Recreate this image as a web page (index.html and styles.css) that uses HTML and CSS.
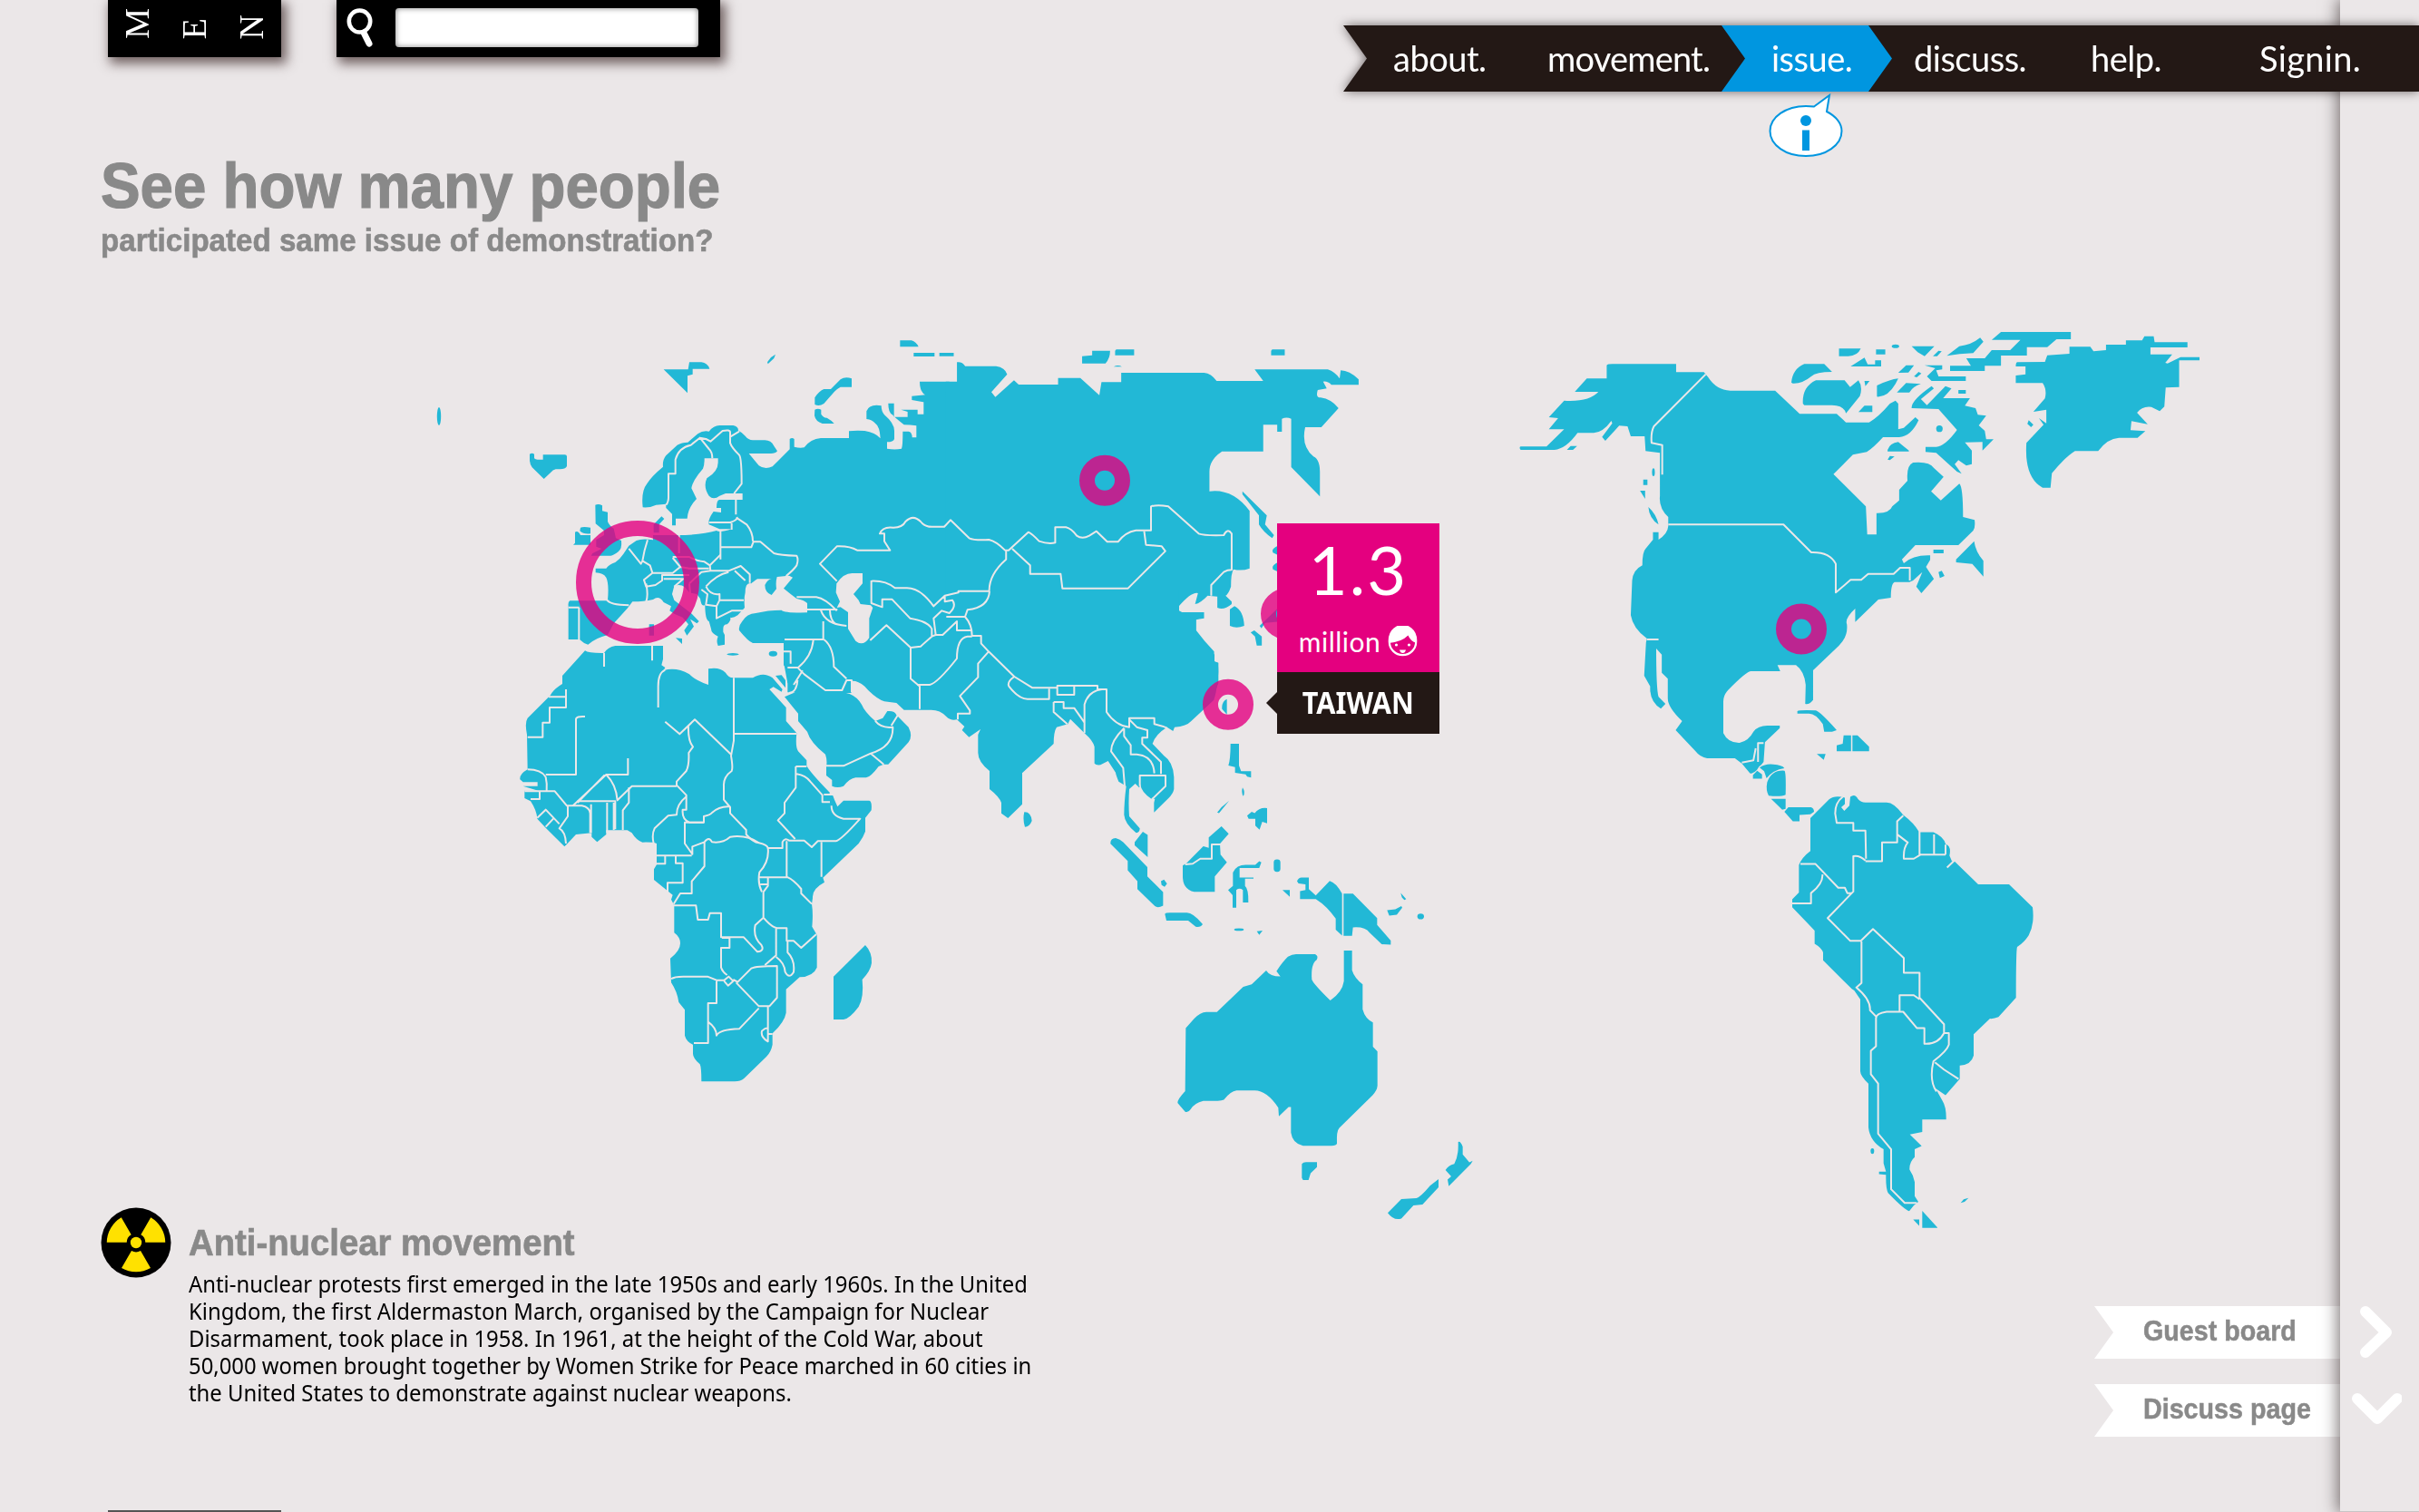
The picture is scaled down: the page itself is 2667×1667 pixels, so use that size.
FILE: index.html
```html
<!DOCTYPE html>
<html lang="en">
<head>
<meta charset="utf-8">
<title>Issue – Anti-nuclear movement</title>
<link rel="stylesheet" href="styles.css">
</head>
<body>
<div class="page">
  <header class="header">
    <div class="menu-tab"><span>M</span><span>E</span><span>N</span></div>
    <div class="search">
      <svg class="search-icon" width="32" height="44" viewBox="0 0 32 44">
        <ellipse cx="15.500" cy="14.500" rx="11.700" ry="12" fill="none" stroke="#fff" stroke-width="4.600"/>
        <path d="M20 27 L26 39" stroke="#fff" stroke-width="7" stroke-linecap="round"/>
      </svg>
      <input class="search-box" type="text" aria-label="Search">
    </div>
    <div class="nav-wrap">
      <div class="nav-shadow">
      <nav class="nav">
        <a class="about">about.</a>
        <a class="movement">movement.</a>
        <a class="issue"><span>issue.</span></a>
        <a class="discuss">discuss.</a>
        <a class="help">help.</a>
        <a class="signin">Signin.</a>
      </nav>
      </div>
      <svg class="bubble" width="84" height="72" viewBox="1949 103 84 72">
        <path d="M2000 117.500 L2017 105 L2014 123 C2024 128 2030.500 136 2030.500 144.500 C2030.500 160 2013 172 1991 172 C1969 172 1951.500 160 1951.500 144.500 C1951.500 129 1969 117 1991 117 Q1996 117 2000 117.500Z" fill="#fff" stroke="#0096e0" stroke-width="2"/>
        <circle cx="1991" cy="133" r="6" fill="#0096e0"/>
        <rect x="1987" y="143.500" width="8" height="22.500" fill="#0096e0"/>
      </svg>
    </div>
  </header>

  <main class="main">
    <h1 class="title">See how many people</h1>
    <p class="subtitle">participated same issue of demonstration?</p>

    <section class="stage">
      <svg class="map" viewBox="0 360 2580 960">
        <g class="land">
          <ellipse cx="484" cy="459" rx="2.200" ry="10"/>
          <g transform="translate(560 360) scale(.33333)">
            <path d="M72 422Q80 417 87 422V436Q92 441 100 440H116V424H188Q195 424 195 430V462Q190 472 172 472H158Q148 474 142 482L119 504L80 466Q72 455 72 440Z"/>
            <path d="M515 142H596L600 118H640Q660 120 667 140H611V158L594 163V220Z"/>
            <path d="M885 92L880 105 860 124 858 118 870 102Z"/>
            <path d="M1015 235Q1030 212 1045 207H1068L1100 175Q1115 165 1137 172V200H1100Q1090 205 1080 215L1045 255Q1030 265 1015 258Z"/>
            <path d="M1015 275Q1025 270 1036 275V290Q1045 303 1055 302Q1070 310 1079 321H1040Q1018 315 1014 295Z"/>
            <path d="M1297 46H1335Q1350 50 1358 67H1297ZM1342 87H1411V99H1342Z"/>
            <path d="M289 590Q300 585 312 592V610L330 614V645Q336 660 350 668L357 700L375 708Q378 735 365 745Q350 757 340 758H275L280 750L310 735L292 728V705L318 690V675L290 652Z"/>
            <path d="M216 722L222 716V680Q232 674 240 690H273V722ZM240 665Q250 661 273 665V685Q250 688 238 676Z"/>
            <path d="M482 655L508 628L517 636L500 655V682H482Z"/>
            <path d="M446 598Q440 545 460 520Q475 495 513 464Q510 435 530 420L560 392Q575 383 595 383L628 355Q645 343 665 347Q680 327 700 327H745Q762 330 762 344Q775 350 785 362Q795 375 810 376H850Q870 376 880 395L891 412Q885 420 870 420H797L830 460Q850 475 875 463L932 406V372Q940 366 947 372V398Q965 403 980 400Q1000 372 1035 369H1128V346Q1150 343 1180 345Q1215 350 1232 370Q1230 330 1215 320Q1205 308 1186 306V280Q1195 255 1235 262Q1235 280 1245 292Q1278 320 1278 345V372Q1275 382 1254 382V404Q1280 409 1302 404Q1306 395 1306 347H1325Q1336 347 1337 367H1351V328Q1330 325 1310 325Q1278 300 1272 292Q1258 285 1258 254H1277V299H1322V282L1300 275H1355V290H1375V250L1336 243V230L1380 226Q1362 215 1362 182H1460V1130L1040 1180H925L912 1110V1047H810Q795 1042 765 1005Q762 990 775 975Q790 950 820 948Q860 938 905 938Q915 948 990 946V915Q980 905 955 900Q935 885 912 866L942 830Q925 820 920 825Q905 826 890 828Q885 845 888 868L872 888Q850 880 850 855Q860 835 872 835Q830 835 825 835Q810 845 805 850Q785 845 785 880Q780 900 783 930L760 955Q745 965 735 962Q740 970 725 985Q712 985 712 1000V1010L717 1020V1052L695 1056Q688 1040 695 1025Q672 1015 672 1000Q668 985 665 975Q652 970 652 920Q640 930 636 900L625 885L600 880L585 862Q570 850 550 858L543 885L550 905L575 925L608 950L632 975L625 982L603 968L615 992L592 1022L583 1005L597 985L578 962L550 950L535 940L540 925L515 912Q500 888 480 903Q450 910 412 910L395 932L350 982L330 1020Q290 1030 265 1052Q250 1048 237 1035H200V930L200 925Q198 910 205 907H325L335 915L330 905Q335 850 325 830Q315 815 290 814V800H325Q335 787 355 780Q370 770 382 752L400 725L425 708Q445 700 480 706V690H560Q640 690 690 675Q700 683 740 670H700L665 655Q660 640 680 612L705 615V600H690Q690 573 700 573H776V552H720L700 560Q680 575 665 560Q645 530 658 502Q695 480 695 450V436H650Q650 460 645 470Q610 510 607 535L624 570Q595 600 593 635H555V658H543V620L523 600V587L490 590Q470 600 446 598Z"/>
            <path d="M467 985H483V1022H467ZM555 1030L576 1032V1050Z"/>
            <ellipse cx="744" cy="1084" rx="20" ry="4"/><ellipse cx="877" cy="1082" rx="14" ry="9"/>
          </g>
          <g transform="translate(940 360) scale(.39541 .33333)">
            <path d="M255 182H291V118Q305 115 314 131H400Q425 135 431 158L387 217L398 233L450 178L463 192H573V170H635L688 227L694 184H749V153H980Q1000 155 1015 180H1145L1121 142H1325Q1345 150 1358 172L1361 145Q1385 145 1411 175V193H1335Q1325 180 1312 182L1322 205L1297 210Q1290 235 1305 235Q1335 240 1355 270L1307 333H1262Q1250 395 1285 430Q1303 440 1303 480V562L1223 465V305Q1210 298 1197 305V348H1184V325H1145V413H1030Q995 440 995 480V545Q1060 535 1107 610V800Q1085 810 1062 803Q1055 815 1055 860Q1048 885 1040 890L1057 910V918Q1035 940 1017 930V893L990 890Q970 915 955 918L963 882Q945 877 910 925V945H980V965Q965 967 958 970V1005Q980 1040 1008 1075V1108L1020 1112V1180L1000 1240H260V182Z"/>
            <path d="M242 87H282V98H242ZM640 98L668 95V80H718Q718 105 705 122H640ZM735 76H785V95H732V80ZM728 133Q740 125 751 133ZM1170 76H1205V95H1167V80Z"/>
            <path d="M1087 545L1155 625L1150 655L1175 690L1170 700Q1145 680 1133 655V625L1087 555Z"/>
            <path d="M1065 925Q1090 940 1092 990Q1070 1000 1052 990V935ZM1110 1012L1120 1005L1141 1025V1055H1127L1122 1025ZM1190 723Q1165 735 1172 748L1190 758ZM1190 778Q1165 790 1172 803L1190 813ZM1135 990L1200 915V975L1150 980L1140 998Z"/>
          </g>
          <g transform="translate(900 640) scale(.33333)">
            <path d="M20 30H1200V100L1255 130V180L1300 225L1317 245V268L1328 272Q1335 330 1315 395L1240 465Q1225 482 1185 485L1180 498L1160 485Q1120 510 1112 540L1150 580Q1180 600 1183 650V690Q1180 705 1165 720L1117 767V735L1120 722H1108Q1075 700 1072 675L1068 685L1055 672L1035 690Q1032 740 1035 780L1070 820Q1070 833 1058 835Q1020 805 1018 775Q1018 735 1025 680L1000 665Q990 640 990 635L965 597L940 610Q925 612 920 605V550Q915 530 890 508L840 458L832 475L795 485Q785 500 785 540L681 637V740L634 786L612 770V735Q605 715 573 690V630Q535 600 535 570V510L543 492L505 518L482 495L490 483L465 460Q445 465 430 450Q410 428 380 428H290L265 405L225 400Q195 390 160 350Q135 330 115 333L116 372L90 372H30L0 345Z"/>
            <path d="M688 766Q710 765 713 795Q705 815 690 815Q682 790 688 766ZM1358 392Q1340 400 1342 425L1358 443Z"/>
          </g>
          <g transform="translate(560 700) scale(.33333)">
            <path d="M925 115V190H950L915 205L960 260V285L990 320Q1000 355 1050 395Q1057 415 1053 435V465L1072 480V500Q1090 508 1110 500Q1130 475 1150 472H1185Q1200 470 1226 435L1243 428H1258L1325 355Q1340 335 1325 305L1285 265Q1280 250 1255 252L1240 275L1215 285Q1180 255 1170 230Q1155 205 1130 195L1110 190V160L1080 100L1050 0H912V100Z"/>
            <path d="M255 52Q265 60 310 60H318Q330 40 355 36H513V80L508 100L520 108L515 118Q555 105 600 130Q620 150 663 165V112Q700 105 720 125Q730 142 745 142H810Q845 120 875 142L908 180L905 188L878 172L865 180L920 240V285L955 325Q950 370 960 385L988 415V432Q995 450 1065 522Q1060 528 1075 532L1080 545L1090 568L1110 548H1195Q1205 550 1202 580L1182 605V650Q1175 670 1160 690L1042 803L1047 818Q1005 840 1008 870L1005 890Q1010 920 1006 965L1022 992V1100Q1010 1130 965 1132L920 1172V1250Q915 1280 875 1318V1355Q870 1380 855 1395L780 1468Q770 1477 750 1477H640Q640 1430 635 1420Q612 1400 612 1385V1355Q590 1345 585 1325V1240L565 1215Q560 1180 540 1150L537 1070Q570 1045 570 1020Q570 1000 550 985V895L540 875L545 860L483 810V775L492 760V690Q480 685 445 686Q425 680 410 655L395 646H325V660L295 685L277 668V655L225 660L197 690L187 700L125 638L97 608Q95 580 75 550L55 540V515H100L50 500H98V487H50L40 478Q38 460 65 445L63 330Q55 290 65 275L140 200Q150 180 180 162V135Z"/>
            <path d="M1182 1026Q1205 1050 1203 1085Q1200 1110 1172 1140Q1178 1200 1160 1230Q1130 1270 1110 1272H1077V1130Z"/>
            <path d="M885 135L905 133L918 150V175Z"/>
          </g>
          <g transform="translate(1180 820) scale(.33333 .34439)">
            <path d="M530 0H558V70L565 88H598V108L585 105L580 98L545 93V75L523 70Q530 50 530 0ZM570 140Q580 155 572 168Q565 155 570 140ZM525 183L492 222L486 220L500 203ZM585 230L600 218L610 222Q625 203 651 206V255L635 250L626 275L612 262V240L590 240Z"/>
            <path d="M440 328L458 333V300L500 264L524 288L495 320L497 355L518 380L478 425V474H410Q370 465 372 420V390L385 382Z"/>
            <path d="M213 315L240 282L256 292V363L213 325ZM133 320Q132 303 150 302Q165 305 175 315L255 395V425L307 475V518Q290 527 280 520L222 465V440L190 405V375ZM300 440L310 435 320 448 312 458 302 452Z"/>
            <path d="M313 545Q315 541 330 541H385Q405 540 438 578Q432 588 415 586L390 566H318Z"/>
            <path d="M538 412Q550 388 580 388H612L625 376L632 380L625 398H560V428H606V432H578V455Q590 465 589 508H571V468Q560 460 549 468V525H537V485L522 468L538 455Z"/>
            <rect x="673" y="370" width="22" height="40" rx="10"/><path d="M702 468H726V490ZM617 600L636 598L625 612Z"/><ellipse cx="558" cy="595" rx="16" ry="4"/>
            <path d="M750 440Q755 428 765 428H789V465L812 486L858 439Q880 445 899 480V614L878 595V560Q850 520 812 497H760V472L778 468V450L755 447ZM904 480H935L1015 558V580L1060 630V643L1030 642L990 605Q975 585 935 588L932 615H904Z"/>
            <path d="M1048 533L1075 530 1095 520 1098 525 1080 547 1055 550ZM1093 478L1111 497 1105 500 1097 492Z"/><ellipse cx="1159" cy="553" rx="11" ry="9"/>
            <path d="M648 726Q660 745 695 745L682 728Q705 695 720 682Q735 673 750 674H810Q822 680 815 692Q795 705 799 755Q805 770 860 822Q900 795 905 760V662H932V725Q940 750 967 770V850Q975 880 1001 892V970L1016 985V1095Q1015 1110 1000 1125L890 1230Q880 1240 882 1280Q880 1288 860 1287H770Q735 1280 730 1245V1163H722L690 1193L688 1165Q650 1110 610 1110H550Q530 1112 508 1140Q500 1144 480 1143H440Q410 1150 398 1170Q390 1182 380 1178L355 1150Q353 1140 380 1112L382 910L410 880Q430 860 450 859H485L572 778L600 770Z"/>
            <path d="M766 1345Q770 1339 780 1339H816V1355L795 1375L788 1397H770L766 1390Z"/>
            <path d="M1283 1275Q1290 1270 1298 1290V1315L1320 1340L1331 1335L1325 1345L1252 1416L1248 1395L1260 1385L1241 1365Q1250 1350 1270 1345Q1285 1320 1283 1275ZM1218 1394V1420L1165 1475L1135 1478L1095 1520Q1070 1528 1050 1502L1095 1458L1145 1455Q1160 1450 1190 1415Z"/>
          </g>
          <g transform="translate(1650 360) scale(.5102 .33333)">
            <path d="M238 128Q240 124 250 124H388V151H448L457 167Q475 210 505 212H602L655 289H735L755 317H805Q825 300 850 255L862 245L868 255V340L880 335L905 300L912 310Q895 365 870 366H835Q815 400 800 415L770 424L728 488L798 595L801 688H821V617Q850 618 855 595L870 575V540L888 510Q885 460 900 450Q935 445 945 468L966 497L939 545L960 575L1000 520Q1008 530 1008 630L1033 640Q1035 665 1030 675L998 723H905L876 770L880 783Q900 755 937 757V772L928 795L945 835L918 882L907 860L920 812L900 840L892 845H860Q852 850 852 897L825 903L775 977V933Q752 965 757 985Q760 1025 740 1055L684 1137V1235Q675 1252 667 1248L668 1185Q665 1140 647 1120H607L613 1140H550Q540 1140 500 1203Q490 1220 490 1240V1345Q500 1378 525 1377Q545 1370 555 1340Q565 1320 585 1320H612V1328L580 1375L577 1440L572 1450L548 1478L530 1445L515 1428H455Q440 1425 430 1405L387 1335L401 1305Q370 1260 370 1230V1165L357 1145V1085L345 1065Q345 1200 350 1225L365 1248L355 1264Q330 1240 332 1190L319 1155L323 1045L325 1032Q295 1000 290 955L293 840Q295 805 315 790Q315 745 322 735L338 705V680H350V705Q370 685 371 660V630Q350 600 353 560V418L322 412L320 363H290L283 330L265 328L235 378L228 365L250 320L248 312Q230 350 210 352H175Q150 405 125 408H52Q48 400 52 397H108L146 340H113L133 303L113 300L146 245Q200 250 220 216H169L195 172H238Z"/>
            <path d="M637 185Q640 140 665 124H708L725 150Q690 150 680 165Q660 190 640 188ZM662 255Q660 200 690 178H752L764 200L782 178Q792 200 785 230L755 287Q750 260 725 260H665ZM782 283L795 262H812V283ZM740 73H787Q780 98 760 98H740ZM820 76H840V92H820ZM765 132L795 103 802 125H818V112H831V132ZM897 65H946L925 98 910 85ZM943 98L955 80 962 82 952 98ZM973 97L1000 65Q1025 62 1045 37L1052 50L1030 88Q1000 90 973 97ZM868 153L885 128H902L890 152ZM902 165L912 150 918 155 908 168ZM822 195Q850 175 868 172L862 190Q845 235 822 232ZM865 218L885 187L917 190Q900 198 892 218ZM795 180H806L797 197Z"/>
            <ellipse cx="862" cy="65" rx="8" ry="6"/>
            <path d="M925 128H963V142L950 145L955 165H1014V180H940L930 165L948 138ZM980 130H1025L1015 105H1055L1070 78H1110L1132 44H1070L1090 18H1241V42H1210L1190 68H1146V96H1090V130H1055V147H980ZM998 210H1014V222H998Z"/>
            <path d="M897 270Q895 245 940 197L945 205L917 240L930 260L970 197L983 205L965 237H1023L1012 262L1035 270L1040 292L1058 295L1042 327L1055 345L1058 373H1074L1050 410V382L1012 383L1027 410V455L1015 460L998 442L990 455L1005 487L995 480L950 418L927 415V398H950Q970 395 995 342L955 273Z"/>
            <ellipse cx="957" cy="338" rx="7" ry="11"/>
            <path d="M845 408Q850 385 868 382L891 410V413H845ZM845 440L850 428 860 430 850 442ZM1032 710Q1035 745 1052 775V827L1028 785L993 780V770ZM944 738H966V750H944ZM955 812L962 808 968 825 958 832ZM317 506H326V524H317ZM310 543H321V570ZM328 597Q345 620 350 655Q330 635 328 597ZM152 408L160 395H174L165 408Z"/>
            <ellipse cx="339" cy="482" rx="3" ry="13"/>
            <path d="M1125 118Q1122 120 1122 132H1143V158L1122 162V187H1180Q1190 210 1185 238L1160 282L1188 275V320L1172 303L1182 325L1145 385Q1140 500 1180 533H1197L1200 485Q1230 430 1250 412H1300Q1320 370 1345 368H1385L1402 346L1370 343L1372 313L1407 323L1384 285Q1395 262 1415 266L1433 280L1443 265L1446 202L1475 200V112H1519V101H1478L1450 122L1445 120L1460 92H1413V69H1493V52H1422L1420 32H1400L1395 46H1360V60H1317V78L1290 82L1283 67H1238V90L1190 95L1185 117ZM1150 310L1160 325 1155 333 1147 322Z"/>
            <path d="M650 1272Q655 1268 690 1270Q700 1275 735 1335L725 1340H708L705 1315Q690 1280 675 1280H650ZM750 1352H766V1405H735V1385L748 1380ZM769 1352H780L805 1390V1405H769ZM692 1414H711L707 1433Z"/>
          </g>
          <g transform="translate(1880 840) scale(.33333 .34439)">
            <path d="M124 0L180 8Q175 30 152 38ZM180 18Q200 5 225 8Q255 10 262 20Q225 25 203 52L195 30ZM205 65Q220 25 262 28Q268 30 266 105Q250 112 210 108Q200 90 205 65ZM158 42L172 28 188 40V54H158ZM218 118H266V150L255 153ZM262 160L275 145H350Q360 148 360 160L348 168L312 170V190H290Z"/>
            <path d="M348 180L410 120Q425 108 450 112L462 115V135L450 145L460 157L477 140L480 112Q495 100 505 118Q515 130 530 130H600Q625 130 655 170Q690 195 708 225L755 225Q790 240 795 263Q815 270 808 300L816 318L825 319L903 392H1005L1083 465Q1090 520 1070 555Q1055 578 1032 592Q1028 600 1028 755L970 817Q955 823 942 822L888 872V940Q880 970 842 972V1015L795 1067L762 1045L785 1085Q798 1105 797 1145H718V1185L677 1193L716 1230L693 1240V1265Q675 1280 676 1305Q690 1325 693 1345V1390L705 1408L690 1420L675 1438Q660 1435 605 1380Q597 1365 598 1322L575 1320V1312H598L590 1285V1240Q545 1215 540 1170V1030Q513 1005 513 990V760L493 732L485 727L390 635V610Q385 595 362 582V540L288 465V440L310 418V330Q320 305 348 285Z"/>
            <path d="M718 1437L768 1490V1492H718ZM688 1465H708V1485ZM845 1412L855 1400L871 1396L858 1408Z"/><ellipse cx="553" cy="1246" rx="6" ry="9"/>
          </g>
        </g>
        <path class="water" transform="translate(560 360) scale(.33333)" d="M1087 850Q1110 815 1140 816H1173V850L1143 885L1160 905L1166 918L1200 922L1207 930L1195 965V1030Q1175 1060 1150 1040L1125 1000V945L1100 928L1088 930L1098 910L1085 880Z"/>
        <g class="borders">
          <g transform="translate(560 360) scale(.33333)">
            <path d="M523 590Q532 580 531 560V487H554V440Q565 400 605 392L635 368L665 405Q676 415 676 436M605 392L635 368L655 372L670 380L710 345Q735 340 735 350V385Q740 400 765 425Q773 435 773 520L748 552M735 365L765 347"/>
            <path d="M754 573V622M665 648H735Q760 640 758 630M755 632L790 655Q810 680 810 710M740 650V672M703 675V770M703 730H805L812 712H835L880 750Q900 757 955 758Q962 770 955 790Q945 805 920 825"/>
            <path d="M566 690V750M545 762L600 762Q620 775 650 778L668 790L703 755M545 765L570 795L545 815H478L470 790L445 775L440 785L400 735M462 706L452 740L445 775M478 815L450 838L457 860L488 855L510 840V822H600M457 850Q465 890 457 910M515 835H580L550 860M570 795L600 800H665M668 790L670 808H730L770 792L800 820V848M750 808L785 840M600 850L640 812L670 808M655 860Q690 820 730 812M655 860Q670 890 700 885V905H780M640 870L660 885L655 920L690 925L700 905M690 925V965L740 940H780M330 905Q335 920 400 922M235 930V1037M200 929H236M600 850L605 905"/>
            <path d="M955 895H1020Q1050 900 1088 940M990 936H1090M1035 938Q1050 985 1120 990M1065 938Q1065 970 1085 985M1043 975V1035H915"/>
            <path d="M1444 662H1410Q1380 665 1365 645Q1340 620 1315 645Q1305 665 1275 665Q1240 660 1230 685H1245V710L1264 740H1155Q1130 725 1088 727L1032 785L1088 842"/>
          </g>
          <g transform="translate(940 360) scale(.39541 .33333)">
            <path d="M255 663L273 640L325 700Q340 708 380 705Q400 710 425 740H435L490 680Q500 685 520 710Q545 720 565 715V664H595Q610 668 625 692Q640 705 660 692L680 677L710 712H740Q760 680 790 674H832V595Q850 588 880 595L965 685Q980 692 1035 690Q1045 665 1057 685V805Q1045 805 1035 812L1000 855V890"/>
            <path d="M445 735L495 790V818H580L585 866H768L872 743L862 727L818 722L813 677M428 742V770Q380 820 381 875"/>
          </g>
          <g transform="translate(900 640) scale(.33333)">
            <path d="M312 220V325L342 350V425M312 222L232 148L178 198M182 0V75L218 88V62H250L310 125Q370 135 382 160V185L345 218L312 222M182 2Q230 0 260 25H300Q345 25 388 85L425 50L470 40V35H573M573 35Q570 90 500 97L492 120H430M425 50V70L450 65Q465 85 440 108L415 100L388 125L395 180H418L465 135V165H513M492 120Q515 145 515 183H545V208L570 235L655 318L715 355H797V378H853V348H797V355M853 348H930V360H960V435Q990 480 1035 485V455H1118V475L1145 482L1160 488"/>
            <path d="M333 345H375Q400 340 465 258Q465 190 500 185H515M382 185L395 180M570 235L535 275V320L475 382L508 430V440H468V460M655 318Q630 335 637 350Q670 393 700 392H770V358M785 402H818V422H853L887 470V505M785 402V435L830 475M887 470V410Q900 365 945 360"/>
            <path d="M1018 488Q975 530 975 565L1015 620L1020 680M1018 488V515L1040 545V575H1060Q1115 580 1118 638M1035 460L1060 485L1095 495V520H1078V540L1140 600V640M1070 680V645H1155V680L1110 724"/>
          </g>
          <g transform="translate(560 700) scale(.33333)">
            <path d="M318 60V105M477 36V85M497 240V170Q497 125 520 116M747 142V350L738 400Q745 440 740 450Q712 470 714 500V545L735 570V590L788 645V660Q810 685 830 688Q858 695 860 705H908V685Q915 670 930 680H980L1005 702L1025 682H1085Q1100 680 1165 608H1110Q1070 600 1070 565M750 327H955M520 287L568 328L618 280L738 395"/>
            <path d="M597 300Q595 350 612 370L598 390Q600 430 590 450L558 485V497L590 530V578H578Q575 610 600 620H648V600Q670 595 675 588Q700 565 735 568M558 500H410L362 547Q358 495 325 462H397V408M325 462L215 565M255 270Q225 268 225 280V462H125M230 555L320 463M135 205H192V180M192 205V240H138V290H115V338H65"/>
            <path d="M65 445Q110 445 125 470Q130 490 128 517H55M105 517V543H75M128 517H155L195 565H245Q270 570 272 590V655M198 565V600L170 640Q190 650 192 690M97 605L125 578L170 625M125 635L150 608M230 550H355V643M275 655V560M328 555V655M350 555V645M400 505V555L380 580V645"/>
            <path d="M590 535Q558 560 558 595L530 598L485 640Q475 660 482 690M648 620H585V690L610 725V700L650 685V765L608 815V855H570L548 890M492 730H608M492 757H520V732M555 733V755H578V820H528V855M650 685Q665 665 675 685Q710 690 735 668Q790 660 830 688"/>
            <path d="M548 895H622L628 942H662L668 920H705V1000H780L825 1048Q850 1045 838 1025Q810 1000 818 960L845 935V850M860 705Q865 750 832 785Q825 820 840 850M830 802H922V682M835 825H860M860 803V830L845 850M922 800Q945 810 970 840V855L1005 890M845 935Q870 965 890 970H922V1012H945L970 1035L1020 990M887 970V1060L850 1092M887 1065Q915 1085 917 1115Q930 1140 945 1115Q950 1075 925 1050V1012"/>
            <path d="M708 1002H733V1035H705V1100Q710 1115 725 1125M540 1138Q550 1130 580 1130H660L690 1142H715L730 1130L745 1145L728 1160L715 1145M745 1140L760 1148L805 1103Q820 1095 890 1095V1200L865 1228H830L755 1150M690 1145V1218H662V1350H615M662 1280Q690 1300 690 1325Q700 1305 765 1303L830 1235M860 1228V1345Q835 1330 840 1310Q850 1300 860 1300M862 1320H875"/>
            <path d="M952 435H988M952 435V505L915 555V590L893 613L950 675M955 460Q985 465 1000 485L1040 530V553H1065M1045 528H1075M1037 685V800"/>
            <path d="M925 108H960Q1005 70 1010 18M912 55H935V95M960 110L980 130L1050 183H1105L1120 150H1137V190M1045 15Q1078 40 1078 105L1120 145M945 165L975 118M958 150Q955 190 930 192M1053 433H1110L1200 392L1243 428M1200 392Q1275 370 1273 305Q1235 310 1215 285M1268 300L1290 265"/>
          </g>
          <path transform="translate(1180 820) scale(.33333 .34439)" d="M380 386L405 384L430 368H468V322H497"/>
          <path transform="translate(1650 360) scale(.5102 .33333)" d="M452 158L340 330Q333 350 335 385L358 392V490M371 655H620L680 747Q720 745 733 785V880L765 838H788L803 818H858L872 798H893V840M325 1035H350M577 1378H565V1440M560 1395L555 1435L530 1442"/>
          <path transform="translate(1880 840) scale(.33333 .34439)" d="M455 112Q430 130 430 165L435 195H490V220H530L532 310M530 318H585V258H635V190L655 172M635 232L670 258Q655 275 657 310H690L712 297H795M709 222V297M757 232V295M795 297V265M800 338L825 315M530 316Q510 298 490 302V415L405 500L480 573H515L555 535L657 628V675H709V755L790 840V868Q770 905 725 902V852H700L655 800H600Q565 805 565 820V910L548 925V1000L572 1030V1190L615 1240V1368L660 1412H700M565 815L545 795Q548 760 500 722L517 708V575M643 797V747H690L709 760M790 868H806V905Q800 925 755 958Q740 1020 765 1055M760 962L790 985L838 1015M315 327H365L440 403H462L470 420H485M388 360Q390 390 350 420V453H288"/>
        </g>
        <g class="pins">
          <circle cx="703" cy="642" r="59.500"/>
          <circle cx="1218" cy="529.700" r="19.500"/>
          <circle cx="1354" cy="776.700" r="19.500"/>
          <circle cx="1418" cy="676.700" r="19.500"/>
          <circle cx="1986" cy="693.500" r="19.500"/>
        </g>
      </svg>
      <div class="card">
        <div class="card-count">
          <strong>1.3</strong>
          <div class="card-unit"><span>million</span>
            <svg width="33" height="35" viewBox="0 0 33 35">
              <circle cx="16.500" cy="17.500" r="14.700" fill="none" stroke="#fff" stroke-width="2.200"/>
              <path d="M1.200 19 A15.700 16.500 0 1 1 31.800 19 Q25 17 22.500 10.500 Q15 18 1.200 19Z" fill="#fff"/>
              <circle cx="9.500" cy="21" r="1.600" fill="#fff"/><circle cx="23.500" cy="21" r="1.600" fill="#fff"/>
              <path d="M13 26.500H20Q19 30 16.500 30Q14 30 13 26.500Z" fill="#fff"/>
            </svg>
          </div>
        </div>
        <div class="card-place"><span>TAIWAN</span></div>
      </div>
    </section>

    <section class="bottom">
      <svg class="radiation" width="78" height="78" viewBox="-39 -39 78 78">
        <circle r="38.500" fill="#000"/>
        <g fill="#ffe100">
          <circle r="6.200"/>
          <path id="blade" d="M-5 9 L-16 28 A32.500 32.500 0 0 0 16 28 L5 9 A10 10 0 0 1 -5 9Z"/>
          <use href="#blade" transform="rotate(120)"/>
          <use href="#blade" transform="rotate(240)"/>
        </g>
      </svg>
      <article class="story">
        <h2>Anti-nuclear movement</h2>
        <p>Anti-nuclear protests first emerged in the late 1950s and early 1960s. In the United<br>Kingdom, the first Aldermaston March, organised by the Campaign for Nuclear<br>Disarmament, took place in 1958. In 1961, at the height of the Cold War, about<br>50,000 women brought together by Women Strike for Peace marched in 60 cities in<br>the United States to demonstrate against nuclear weapons.</p>
      </article>
      <div class="ribbons">
        <a class="ribbon"><span>Guest board</span></a>
        <a class="ribbon"><span>Discuss page</span></a>
      </div>
    </section>
    <div class="next-tab"></div>
  </main>

  <aside class="side">
    <svg width="60" height="57" viewBox="0 0 60 57"><path d="M20 6L43 29L20 51"/></svg>
    <svg width="60" height="57" viewBox="0 0 60 57"><path d="M11 17L33 39L55 17"/></svg>
  </aside>
</div>
</body>
</html>
```
FILE: styles.css
```css
* { box-sizing: border-box; }

body { margin: 0; background: #ebe7e8; }

.page {
  width: 2667px;
  height: 1667px;
  display: grid;
  grid-template-columns: 2580px 87px;
  grid-template-rows: 170px 1497px;
  overflow: hidden;
  background: #ebe7e8;
  font-family: "Liberation Sans", Arial, sans-serif;
}

/* header */
.header {
  grid-column: 1 / -1;
  grid-row: 1;
  z-index: 3;
  display: flex;
  align-items: flex-start;
  padding-left: 119px;
}

.menu-tab,
.search {
  height: 63px;
  background: #000;
  box-shadow: 4px 5px 12px 2px rgba(60, 40, 40, .7);
}

.menu-tab {
  width: 191px;
  display: flex;
  align-items: flex-end;
  gap: 19px;
  padding: 0 0 20px 10px;
  color: #fff;
  font: 38px/44px "Liberation Serif", serif;
}

.menu-tab span {
  writing-mode: vertical-rl;
  transform: rotate(180deg);
}

.search {
  width: 423px;
  margin-left: 61px;
  display: flex;
  align-items: center;
  padding: 0 24px 2px 10px;
}

.search-icon { margin-right: 23px; }

.search-box {
  flex: 1;
  height: 43px;
  border: 0;
  border-radius: 4px;
  background: #fff;
  box-shadow: inset 0 0 6px rgba(0, 0, 0, .5);
}

.nav-wrap {
  position: relative;
  width: 1186px;
  margin: 28px 0 0 auto;
}

.nav-shadow { filter: drop-shadow(0 0 6px rgba(40, 30, 30, .65)); }

.nav {
  height: 73px;
  display: flex;
  padding-left: 55px;
  background: #231815;
  clip-path: polygon(0 0, 100% 0, 100% 100%, 0 100%, 26px 50%);
  color: #fff;
  font: 38px/72px Lato, sans-serif;
  letter-spacing: -.5px;
}

.about { width: 170px; }
.movement { width: 192px; letter-spacing: -.8px; }
.issue {
  width: 188px;
  padding-left: 55px;
  background: #0096e0;
  clip-path: polygon(0 0, 162px 0, 100% 50%, 162px 100%, 0 100%, 26px 50%);
}
.discuss { width: 195px; padding-left: 24px; }
.help { width: 187px; padding-left: 24px; }
.signin { padding-left: 23px; letter-spacing: .3px; }

.bubble {
  position: absolute;
  left: 468px;
  top: 75px;
}

/* main column */
.main {
  grid-column: 1;
  grid-row: 2;
  display: flex;
  flex-direction: column;
}

.title,
.subtitle {
  margin: 0 0 0 111px;
  color: #898989;
  font-weight: bold;
  white-space: nowrap;
  transform-origin: 0 0;
}

.title { font-size: 69.5px; line-height: 70px; transform: scaleX(.941); -webkit-text-stroke: 1.2px #898989; }
.subtitle { margin-top: 5px; font-size: 34.5px; line-height: 40px; transform: scaleX(.96); -webkit-text-stroke: .6px #898989; }

/* map */
.stage {
  position: relative;
  height: 960px;
  margin-top: 75px;
}

.map { display: block; width: 2580px; height: 960px; overflow: visible; }
.land { fill: #22b8d6; }
.water { fill: #ebe7e8; }
.borders path {
  fill: none;
  stroke: #ebe7e8;
  stroke-width: 2px;
  stroke-linejoin: round;
  vector-effect: non-scaling-stroke;
}
.pins { fill: none; stroke: #e4007f; stroke-width: 17px; stroke-opacity: .8; }

.card {
  position: absolute;
  left: 1408px;
  top: 217px;
  width: 179px;
  color: #fff;
}

.card-count {
  height: 164px;
  display: flex;
  flex-direction: column;
  align-items: center;
  padding-top: 6px;
  background: #e4007f;
  font-family: Lato, sans-serif;
}

.card-count strong { font-size: 74px; line-height: 90px; font-weight: 400; letter-spacing: 2px; }

.card-unit {
  display: flex;
  align-items: center;
  gap: 8px;
  margin-top: 16px;
  font-size: 30px;
  line-height: 36px;
  letter-spacing: .5px;
}

.card-place {
  position: relative;
  height: 68px;
  background: #231815;
  text-align: center;
  font: bold 34px/66px "Noto Sans", sans-serif;
}

.card-place::before {
  content: "";
  position: absolute;
  left: -12px;
  top: 22px;
  border: solid transparent;
  border-width: 12px 12px 12px 0;
  border-right-color: #231815;
}

.card-place span { display: inline-block; transform: scaleX(.9); }

/* bottom */
.bottom {
  display: flex;
  align-items: flex-start;
  padding-left: 111px;
  margin-top: 11px;
}

.story { margin: 16px 0 0 19px; width: 1000px; }

.story h2 {
  margin: 0;
  color: #898989;
  font-size: 41px;
  line-height: 46px;
  white-space: nowrap;
  transform: scaleX(.934);
  transform-origin: 0 0;
  -webkit-text-stroke: .7px #898989;
}

.story p {
  margin: 7px 0 0;
  color: #000;
  font: 24.8px/30px "Noto Sans", sans-serif;
  white-space: nowrap;
  transform: scaleX(.962);
  transform-origin: 0 0;
}

.ribbons {
  margin: 109px 0 0 auto;
  display: flex;
  flex-direction: column;
  gap: 28px;
}

.ribbon {
  width: 271px;
  height: 58px;
  padding-left: 54px;
  background: #fff;
  clip-path: polygon(0 0, 100% 0, 100% 100%, 0 100%, 21px 50%);
  color: #898989;
  font-size: 30.5px;
  font-weight: bold;
  line-height: 54px;
  -webkit-text-stroke: .5px #898989;
}

.ribbon span { display: inline-block; transform: scaleX(.94); transform-origin: 0 0; }

.next-tab {
  width: 191px;
  height: 2px;
  margin: auto 0 0 119px;
  background: #555;
}

/* right panel */
.side {
  grid-column: 2;
  grid-row: 1 / -1;
  z-index: 2;
  display: flex;
  flex-direction: column;
  gap: 28px;
  padding: 1440px 0 0 8px;
  background: #ebe7e8;
  box-shadow: -2px 0 16px 1px rgba(50, 40, 40, .6);
  border-bottom: 1px solid #c8c4c5;
}

.side path {
  fill: none;
  stroke: #fff;
  stroke-width: 12px;
  stroke-linecap: round;
  stroke-linejoin: round;
}
```
